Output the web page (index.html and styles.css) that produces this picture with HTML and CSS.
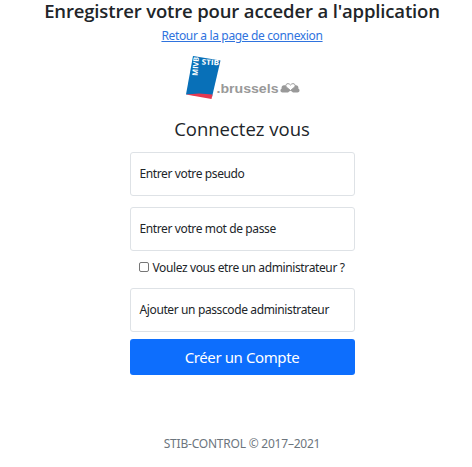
FILE: index.html
```html
<!DOCTYPE html>
<html lang="fr">
<head>
<meta charset="utf-8">
<title>STIB-CONTROL</title>
<link rel="stylesheet" href="styles.css">
</head>
<body>
<main class="page">
  <h1 class="title">Enregistrer votre pour acceder a l'application</h1>
  <a class="back" href="#"><span>Retour a la page de connexion</span></a>
  <svg class="logo" width="116" height="44" viewBox="0 0 116 44" role="img" aria-label="STIB MIVB .brussels">
    <path d="M8 0 35.500 4.500 27 41 1 38.500Z" fill="#0870b8"/>
    <path d="M1 38.500 14 37.500 27.500 38.500 26.500 43Z" fill="#e63950"/>
    <text class="mark" x="16.500" y="8.500" textLength="17.500" lengthAdjust="spacingAndGlyphs" transform="rotate(3 17 8.500)">STIB</text>
    <text class="mark" x="0" y="0" textLength="19" lengthAdjust="spacingAndGlyphs" transform="translate(12.500 20) rotate(-86)">MIVB</text>
    <text class="domain" x="31.500" y="37" textLength="62" lengthAdjust="spacingAndGlyphs">.brussels</text>
    <path d="M100.500 29.500c-2.500-1-4.500.8-3.800 3-2 .9-1.500 4 .8 4h5.500l2.500-2 2.500 2h4.500c2.300 0 2.800-3.100.8-4 .7-2.200-1.300-4-3.800-3Z" fill="#999"/>
    <path d="M105.500 34.500 101.300 31c-1.800-2.800 2-4.800 4.200-2 2.200-2.800 6-.8 4.200 2Z" fill="#fff" stroke="#999"/>
  </svg>
  <form class="form">
    <h2 class="subtitle"><span>Connectez vous</span></h2>
    <div class="field"><span>Entrer votre pseudo</span></div>
    <div class="field"><span>Entrer votre mot de passe</span></div>
    <label class="check"><input type="checkbox"><span>Voulez vous etre un administrateur ?</span></label>
    <div class="field last"><span>Ajouter un passcode administrateur</span></div>
    <button class="submit" type="button"><span>Créer un Compte</span></button>
  </form>
  <p class="copy"><span>STIB-CONTROL © 2017–2021</span></p>
</main>
</body>
</html>
```
FILE: styles.css
```css
* { box-sizing: border-box; }
body {
  margin: 0;
  background: #fff;
  color: #212529;
  font: 12px/18px "Noto Sans", "Open Sans", sans-serif;
}
.page {
  display: flex;
  flex-direction: column;
  align-items: center;
  padding-left: 12px;
  height: 467px;
}
span { white-space: nowrap; }
.title {
  margin: 0;
  height: 24px;
  font-family: "Open Sans", sans-serif;
  font-size: 18.500px;
  line-height: 21px;
  font-weight: 600;
  letter-spacing: -0.15px;
  white-space: nowrap;
}
.back {
  margin-top: 3px;
  height: 18px;
  color: #2f73de;
  letter-spacing: -0.35px;
}
.logo { margin: 11px 0 0 1px; }
.mark { font: bold 7.500px "Open Sans", sans-serif; fill: #fff; }
.domain { font: bold 12px "Liberation Sans", sans-serif; fill: #999; }
.form {
  width: 225px;
  display: flex;
  flex-direction: column;
}
.subtitle {
  margin: 16px 0 10px;
  font-family: "Open Sans", sans-serif;
  font-size: 18.500px;
  line-height: 26px;
  font-weight: 400;
  text-align: center;
}
.field {
  display: flex;
  align-items: center;
  height: 44px;
  margin-bottom: 11px;
  padding: 0 9px;
  border: 1px solid #dee2e6;
  border-radius: 3px;
  letter-spacing: -0.38px;
}
.check {
  display: flex;
  align-items: center;
  height: 18px;
  margin: -3px 0 11px 9px;
  letter-spacing: -0.38px;
}
.check input {
  appearance: none;
  width: 10px;
  height: 10px;
  margin: -2px 4px 0 0;
  border: 1px solid #767676;
  border-radius: 2px;
}
.last { margin-bottom: 7px; }
.submit {
  height: 36px;
  padding: 0;
  border: 0;
  border-radius: 3px;
  background: #0d6efd;
  color: #fff;
  font: 15px/20px "Noto Sans", "Open Sans", sans-serif;
  letter-spacing: -0.4px;
}
.copy {
  margin: 60px 0 0;
  color: #6c757d;
  letter-spacing: -0.22px;
}
```
